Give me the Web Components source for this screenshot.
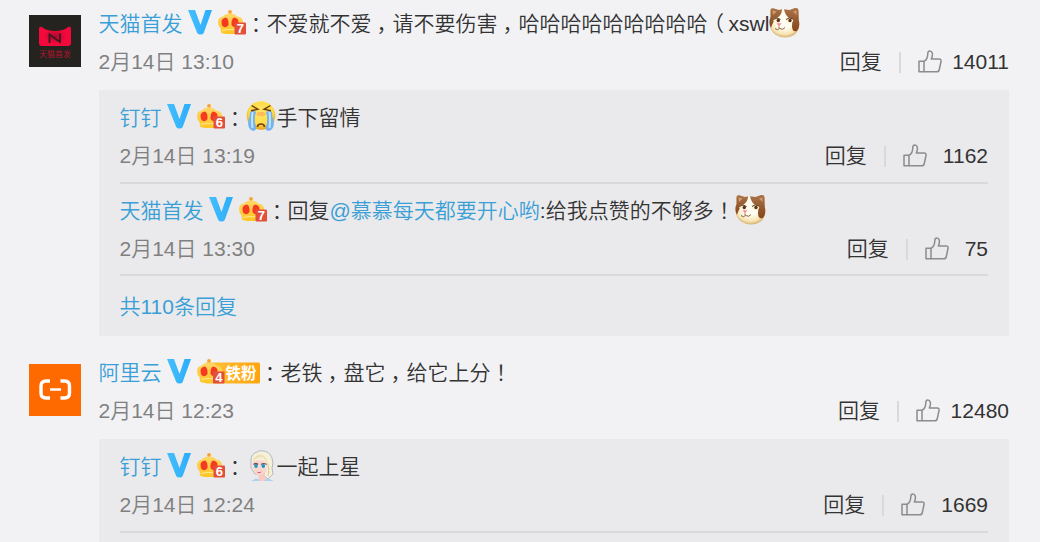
<!DOCTYPE html>
<html lang="zh-CN">
<head>
<meta charset="utf-8">
<title>评论</title>
<style>
  html, body {
    margin: 0;
    height: 542px;
    overflow: hidden;
    background: #f2f2f5;
  }
  body {
    font: 350 21px/38px "Liberation Sans", "Noto Sans CJK SC", sans-serif;
    color: #333;
  }
</style>
</head>
<body>
<comment-list>
  <comment-item avatar="tmall" user="天猫首发" level="7" time="2月14日 13:10" likes="14011">不爱就不爱<wide-mark kind="comma">，</wide-mark>请不要伤害<wide-mark kind="comma">，</wide-mark>哈哈哈哈哈哈哈哈哈<wide-mark kind="paren">（</wide-mark>xswl<emoji-icon name="cat"></emoji-icon>
    <comment-reply slot="replies" user="钉钉" level="6" time="2月14日 13:19" likes="1162"><emoji-icon name="cry"></emoji-icon>手下留情</comment-reply>
    <comment-reply slot="replies" user="天猫首发" level="7" time="2月14日 13:30" likes="75">回复<user-link>@慕慕每天都要开心哟</user-link>:给我点赞的不够多<wide-mark>！</wide-mark><emoji-icon name="cat"></emoji-icon></comment-reply>
    <more-replies slot="replies">共110条回复</more-replies>
  </comment-item>
  <comment-item avatar="aliyun" user="阿里云" level="4" fan="铁粉" time="2月14日 12:23" likes="12480">老铁<wide-mark kind="comma">，</wide-mark>盘它<wide-mark kind="comma">，</wide-mark>给它上分<wide-mark>！</wide-mark>
    <comment-reply slot="replies" user="钉钉" level="6" time="2月14日 12:24" likes="1669"><emoji-icon name="elsa"></emoji-icon>一起上星</comment-reply>
  </comment-item>
</comment-list>

<script>
const EMOJI = {
  cat: `
    <defs>
      <radialGradient id="g" cx=".5" cy=".4" r=".62"><stop offset=".45" stop-color="#fffdf2"/><stop offset=".8" stop-color="#f7e3b0"/><stop offset="1" stop-color="#cfa768"/></radialGradient>
      <linearGradient id="fur" x2="0" y2="1"><stop offset="0" stop-color="#a9744a"/><stop offset="1" stop-color="#874318"/></linearGradient>
    </defs>
    <path d="M1.500 4Q1.500 .5 5 1.500L10 3Q15 1.500 20.500 3L26 1Q29.500 .5 29.500 4L29.800 13Q32 23 25 28Q16 33 7 28Q-1 23 1 13Z" fill="url(#g)"/>
    <path d="M1.500 4Q1.500 .5 5 1.500L10 3L13 2.200Q13 8 8 11Q4 14 2 21Q-1 16 1.500 10Z" fill="url(#fur)"/>
    <path d="M15 2.200L20.500 3L26 1Q29.500 .5 29.500 4L29.800 13Q31.500 20 28 24Q23 25.500 23 19Q24 12 20 11Q16 8 15 2.200Z" fill="url(#fur)"/>
    <path d="M3.500 3.500L7.500 4.500L4 8ZM27.500 3.500L24 4.500L27.500 8Z" fill="#d39a75"/>
    <ellipse cx="8" cy="13.500" rx="3.600" ry="2.700" fill="#fff4da"/><ellipse cx="20.500" cy="13.500" rx="3.600" ry="2.700" fill="#fff4da"/>
    <path d="M4.500 12.500Q8 9.500 11.500 12.500M17 12.500Q20 9.500 24 12" fill="none" stroke="#5a3318" stroke-width="1"/>
    <circle cx="9.300" cy="13.500" r="1.700" fill="#5a3318"/><circle cx="21" cy="13.500" r="1.700" fill="#5a3318"/>
    <path d="M7.500 16.300h5L10 19.500z" fill="#f08c98"/>
    <path d="M10 19.500v1.500M6 21.500Q8.500 24 10.500 21.500Q14 23.500 16 20.500" fill="none" stroke="#8a6248" stroke-width="1"/>`,
  cry: `
    <defs><radialGradient id="g" cx=".5" cy=".4" r=".6"><stop offset="0" stop-color="#ffe566"/><stop offset=".7" stop-color="#ffdc45"/><stop offset="1" stop-color="#e09b16"/></radialGradient></defs>
    <circle cx="15" cy="14.500" r="14.300" fill="url(#g)"/>
    <ellipse cx="15" cy="13" rx="4.500" ry="2.200" fill="#ffac55" opacity=".7"/>
    <path d="M4 11Q7 9 10 11Q7.500 19 10 26Q10.500 31 6 29.500Q1 27 2.500 19Q4 15 4 11ZM26 11Q23 9 20 11Q22.500 19 20 26Q19.500 31 24 29.500Q29 27 27.500 19Q26 15 26 11Z" fill="#74b2f0"/>
    <path d="M6.500 11Q5.500 20 6.500 27M23.500 11Q24.500 20 23.500 27" stroke="#bfe3ff" stroke-width="2" fill="none"/>
    <path d="M5.500 4.500L12 8.300L5 9.800M24.500 4.500L18 8.300L25 9.800" fill="none" stroke="#6b3f10" stroke-width="1.400"/>
    <path d="M11.500 26Q11.500 23 15 23T18.500 26" fill="none" stroke="#754111" stroke-width="1.700"/>`,
  elsa: `
    <path d="M5 10Q5 4 11 2Q13 0 17 1Q23 1 26 8Q28 13 26 18L27 24L22 29L17 25L9 24L5 18Z" fill="#f6f0d8" stroke="#aeb8c8" stroke-width="1"/>
    <path d="M6.500 14Q8 10 14 10Q19 10 21 14L20.500 21Q17 26.500 13.500 26.500Q9 24 6.500 18Z" fill="#fbd6cf"/>
    <path d="M12 26L19 22V28L24 31H10L13 28Z" fill="#f7cbc4"/>
    <path d="M5 31Q8 29 11 28.500L14 31ZM18 31L22 28.500L27 30.500V31Z" fill="#a9d2ef"/>
    <path d="M6.500 14Q8 7 17 7L21.500 14Q21 5 14 4.500Q6.500 6 6.500 14Z" fill="#ede0b8"/>
    <path d="M21 13Q24 18 22 26" fill="none" stroke="#dccda0" stroke-width="1.200"/>
    <ellipse cx="10" cy="16" rx="2.500" ry="2" fill="#fff"/><ellipse cx="17.500" cy="16" rx="2.700" ry="2" fill="#fff"/>
    <circle cx="10" cy="16" r="1.900" fill="#2494bf"/><circle cx="17.300" cy="16" r="1.900" fill="#2494bf"/>
    <path d="M7.500 14.500Q10 12.500 12 14.500M15 14.500Q17.500 12.500 20.500 14.500" fill="none" stroke="#6a5360" stroke-width="1.200"/>
    <path d="M10.500 21.500Q13 23 15.500 21.300Q13.500 25 10.500 21.500" fill="#d13f66"/>`
};

const CROWN = `
  <circle cx="12" cy="2" r="1.900" fill="#f9a22c"/>
  <path d="M0 12Q0 7 5 6.500Q7 3.500 12 3.500T19 6.500Q25 7 25 12Q25 16 22.500 18L22 22Q21 24 12 24T3 22L2.500 18Q0 16 0 12Z" fill="url(#crown)"/>
  <path d="M3.500 12Q3.500 8 8 7.500Q11 9 10.500 15Q8 18.500 5 16.500Q3.500 15 3.500 12ZM20.500 12Q20.500 8 16 7.500Q13 9 13.500 15Q16 18.500 19 16.500Q20.500 15 20.500 12Z" fill="#f53a20"/>
  <path d="M4 20.500Q12 18.500 20 20.500" fill="none" stroke="#ffe98a" stroke-width="1.200"/>`;

class BaseElement extends HTMLElement {
  connectedCallback() {
    if (this.shadowRoot) return;
    this.attachShadow({ mode: 'open' });
    this.shadowRoot.innerHTML = this.template().trim();
  }
  attr(name) {
    return this.getAttribute(name) || '';
  }
}

class CommentList extends BaseElement {
  template() {
    return `
      <style>
        :host { display: flex; flex-direction: column; height: 542px; box-sizing: border-box; padding: 5px 31px 0 29px; }
      </style>
      <slot></slot>
    `;
  }
}

class EmojiIcon extends BaseElement {
  template() {
    return `
      <style>
        :host { display: inline-block; width: 31px; height: 31px; line-height: 0; vertical-align: middle; margin-top: -5px; }
        svg { display: block; }
      </style>
      <svg width="31" height="31" viewBox="0 0 31 31">${EMOJI[this.attr('name')]}</svg>
    `;
  }
}

// full-width punctuation, placed near the middle of its em box
class WideMark extends BaseElement {
  template() {
    return `
      <style>
        :host { display: inline-block; box-sizing: border-box; width: 21px; font-family: "Noto Sans CJK TC", sans-serif; line-height: 1; }
        :host([kind]) { font-family: "Noto Sans CJK SC", sans-serif; font-feature-settings: "halt"; }
        :host([kind="comma"]) { padding-left: 5px; }
        :host([kind="paren"]) { padding-left: 6px; }
      </style><slot></slot>`;
  }
}

// stays inline, so no white space round the slot
class UserLink extends BaseElement {
  template() {
    return `<style>:host { color: #3a9fd6; }</style><slot></slot>`;
  }
}

class VerifiedMark extends BaseElement {
  template() {
    return `
      <style>
        :host { display: block; width: 24px; height: 25px; line-height: 0; }
      </style>
      <svg width="24" height="25" viewBox="0 0 24 25">
        <defs><linearGradient id="v"><stop offset="0" stop-color="#45bffb"/><stop offset="1" stop-color="#2badfc"/></linearGradient></defs>
        <path d="M0 0H7L12.500 15L17.500 0H24L15.700 23Q15 24.500 12.500 24.500Q10 24.500 9.200 23Z" fill="url(#v)"/>
      </svg>
    `;
  }
}

class LevelBadge extends BaseElement {
  template() {
    const fan = this.attr('fan');
    const width = fan ? 63 : 28;
    const x = fan ? 16 : 16.5;
    return `
      <style>
        :host { display: block; width: ${width}px; height: 25px; line-height: 0; }
        text { font-family: "Liberation Sans", "Noto Sans CJK SC", sans-serif; font-weight: bold; fill: #fff; }
      </style>
      <svg width="${width}" height="25" viewBox="0 0 ${width} 25">
        <defs>
          <linearGradient id="crown" x2="0" y2="1"><stop offset="0" stop-color="#ffd768"/><stop offset="1" stop-color="#ffc524"/></linearGradient>
          <linearGradient id="fan"><stop offset="0" stop-color="#ffc63a"/><stop offset="1" stop-color="#ffa30f"/></linearGradient>
        </defs>
        ${fan ? '<rect x="8" y="3.500" width="55" height="21" rx="1.500" fill="url(#fan)"/>' : ''}
        ${CROWN}
        <rect x="${x}" y="12.500" width="11.500" height="12" rx="1" fill="#e2503c"/>
        <text x="${x + 5.75}" y="23.200" font-size="13" text-anchor="middle">${this.attr('level')}</text>
        ${fan ? `<text x="28.500" y="19.800" font-size="15.500">${fan}</text>` : ''}
      </svg>
    `;
  }
}

class CommentLine extends BaseElement {
  template() {
    return `
      <style>
        :host { display: flex; height: 38px; align-items: center; white-space: nowrap; }
        user-link { margin-left: -.5px; }
        verified-mark { margin: -3px 6px 0 5.5px; }
        level-badge { margin: -3px -.5px 0 0; }
        wide-mark { margin-top: -1px; }
        .text { height: 38px; }
      </style>
      <user-link>${this.attr('user')}</user-link>
      <verified-mark></verified-mark>
      <level-badge level="${this.attr('level')}" fan="${this.attr('fan')}"></level-badge>
      <wide-mark>：</wide-mark>
      <div class="text"><slot></slot></div>
    `;
  }
}

class CommentMeta extends BaseElement {
  template() {
    return `
      <style>
        :host { display: flex; height: 38px; align-items: center; white-space: nowrap; }
        .time { flex: 1; margin-left: -.5px; color: #808080; }
        .line { width: 2px; height: 21px; margin: 0 17px; background: #d9d9db; }
        svg { margin: -1px var(--like-gap, 10.5px) 0 0; }
      </style>
      <span class="time">${this.attr('time')}</span>
      <span>回复</span>
      <span class="line"></span>
      <svg width="24" height="23" viewBox="0 0 24 23" fill="none" stroke="#8c8c8c" stroke-width="1.500" stroke-linejoin="round">
        <path d="M1 11.300H6V21.800H1Z"/>
        <path d="M6 11.300C9 9.800 9.800 7 9.800 3.500C9.800 .3 13.300 .2 14.200 3C14.800 5 14.300 7 13.300 9H21C22.800 9 23.300 10 23 11.500L21.300 19.500C21 21.200 20.300 21.800 18.800 21.800H6"/>
      </svg>
      <span>${this.attr('likes')}</span>
    `;
  }
}

class CommentReply extends BaseElement {
  template() {
    return `
      <style>
        :host { display: block; padding: 8px 0 6px; border-bottom: 2px solid #d9d9db; }
        :host(:first-of-type) { padding: 9px 0 7px; }
        comment-meta { --like-gap: 16px; }
      </style>
      <comment-line user="${this.attr('user')}" level="${this.attr('level')}"><slot></slot></comment-line>
      <comment-meta time="${this.attr('time')}" likes="${this.attr('likes')}"></comment-meta>
    `;
  }
}

class MoreReplies extends BaseElement {
  template() {
    return `
      <style>
        :host { display: flex; height: 58px; padding-top: 2px; align-items: center; color: #3a9fd6; }
        span { margin-left: -.5px; }
      </style>
      <span><slot></slot></span>
    `;
  }
}

class UserAvatar extends BaseElement {
  template() {
    const art = this.attr('name') === 'tmall' ? `
      <defs><radialGradient id="m" cx=".5" cy=".5" r=".6"><stop offset="0" stop-color="#a80a2c"/><stop offset=".6" stop-color="#f5083c"/></radialGradient></defs>
      <rect width="52" height="52" fill="#25231f"/>
      <path d="M10 14Q10 11 13 12Q17 16 26 16T39 12Q42 11 42 14V28Q42 31 39 31H13Q10 31 10 28Z" fill="url(#m)"/>
      <path d="M20.500 28V19.500L31 27V18.500" fill="none" stroke="#3d1820" stroke-width="1.800"/>
      <text x="26" y="41.500" font-size="8" text-anchor="middle" fill="#b3122f">天猫首发</text>` : `
      <rect width="52" height="52" fill="#ff6a00"/>
      <path d="M21 17H17Q12 17 12 22V29Q12 34 17 34H21M31.500 17H35.500Q40.500 17 40.500 22V29Q40.500 34 35.500 34H31.500" fill="none" stroke="#fff" stroke-width="3.400"/>
      <path d="M21 25.500H32" stroke="#fff" stroke-width="2.500"/>`;
    return `
      <style>
        :host { display: block; flex: none; width: 52px; height: 52px; line-height: 0; }
        text { font-family: "Noto Sans CJK SC", sans-serif; font-weight: 400; }
      </style>
      <svg width="52" height="52" viewBox="0 0 52 52">${art}</svg>
    `;
  }
}

class CommentItem extends BaseElement {
  template() {
    return `
      <style>
        :host { display: flex; flex: none; height: 331px; padding-bottom: 18px; }
        :host(:last-of-type) { flex: 1; height: auto; min-height: 0; padding-bottom: 0; }
        user-avatar { margin: 10px 18px 0 0; }
        .main { display: flex; flex: 1; flex-direction: column; }
        .replies { flex: 1; margin-top: 9px; padding: 0 21px; background: #eaeaec; }
      </style>
      <user-avatar name="${this.attr('avatar')}"></user-avatar>
      <div class="main">
        <comment-line user="${this.attr('user')}" level="${this.attr('level')}" fan="${this.attr('fan')}"><slot></slot></comment-line>
        <comment-meta time="${this.attr('time')}" likes="${this.attr('likes')}"></comment-meta>
        <div class="replies"><slot name="replies"></slot></div>
      </div>
    `;
  }
}

customElements.define('comment-list', CommentList);
customElements.define('emoji-icon', EmojiIcon);
customElements.define('wide-mark', WideMark);
customElements.define('user-link', UserLink);
customElements.define('verified-mark', VerifiedMark);
customElements.define('level-badge', LevelBadge);
customElements.define('comment-line', CommentLine);
customElements.define('comment-meta', CommentMeta);
customElements.define('comment-reply', CommentReply);
customElements.define('more-replies', MoreReplies);
customElements.define('user-avatar', UserAvatar);
customElements.define('comment-item', CommentItem);
</script>
</body>
</html>
